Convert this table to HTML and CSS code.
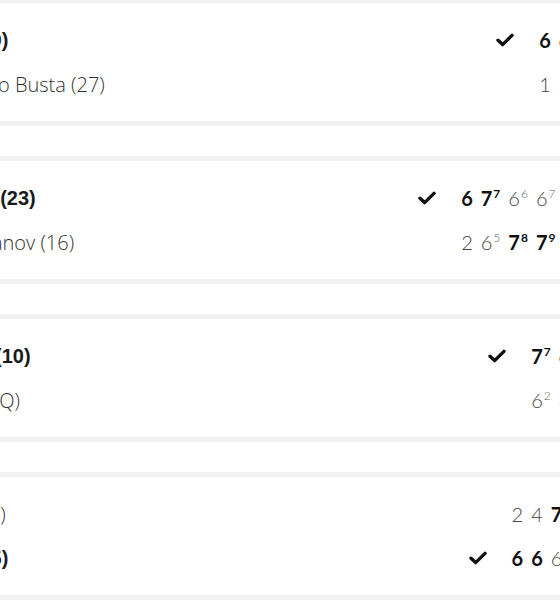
FILE: index.html
```html
<!DOCTYPE html>
<html lang="en">
<head>
<meta charset="utf-8">
<title>Results</title>
<link rel="stylesheet" href="styles.css">
</head>
<body>
<div class="list">

  <div class="match sets-3">
    <div class="name win">T. Fritz (9)</div>
    <div class="check"><svg viewBox="0 0 18 14" width="18" height="14"><path d="M2 7.2 L6.6 11.6 L16 2.4" /></svg></div>
    <div class="set win"><span class="g">6</span></div>
    <div class="set win"><span class="g">6</span></div>
    <div class="set win"><span class="g">6</span></div>

    <div class="name">P. Carreño Busta (27)</div>
    <div class="check"></div>
    <div class="set"><span class="g">1</span></div>
    <div class="set"><span class="g">2</span></div>
    <div class="set"><span class="g">3</span></div>
  </div>

  <div class="match sets-5">
    <div class="name win">F. Tiafoe (23)</div>
    <div class="check"><svg viewBox="0 0 18 14" width="18" height="14"><path d="M2 7.2 L6.6 11.6 L16 2.4" /></svg></div>
    <div class="set win"><span class="g">6</span></div>
    <div class="set win"><span class="g">7</span><span class="tb">7</span></div>
    <div class="set"><span class="g">6</span><span class="tb">6</span></div>
    <div class="set"><span class="g">6</span><span class="tb">7</span></div>
    <div class="set win"><span class="g">7</span><span class="tb">10</span></div>

    <div class="name">K. Khachanov (16)</div>
    <div class="check"></div>
    <div class="set"><span class="g">2</span></div>
    <div class="set"><span class="g">6</span><span class="tb">5</span></div>
    <div class="set win"><span class="g">7</span><span class="tb">8</span></div>
    <div class="set win"><span class="g">7</span><span class="tb">9</span></div>
    <div class="set"><span class="g">6</span><span class="tb">8</span></div>
  </div>

  <div class="match sets-3">
    <div class="name win">N. Jarry (10)</div>
    <div class="check"><svg viewBox="0 0 18 14" width="18" height="14"><path d="M2 7.2 L6.6 11.6 L16 2.4" /></svg></div>
    <div class="set win"><span class="g">7</span><span class="tb">7</span></div>
    <div class="set win"><span class="g">6</span></div>
    <div class="set win"><span class="g">6</span></div>

    <div class="name">J. Kubler (Q)</div>
    <div class="check"></div>
    <div class="set"><span class="g">6</span><span class="tb">2</span></div>
    <div class="set"><span class="g">3</span></div>
    <div class="set"><span class="g">4</span></div>
  </div>

  <div class="match sets-4">
    <div class="name">J. Djere (5)</div>
    <div class="check"></div>
    <div class="set"><span class="g">2</span></div>
    <div class="set"><span class="g">4</span></div>
    <div class="set win"><span class="g">7</span><span class="tb">7</span></div>
    <div class="set"><span class="g">3</span></div>

    <div class="name win">T. Paul (5)</div>
    <div class="check"><svg viewBox="0 0 18 14" width="18" height="14"><path d="M2 7.2 L6.6 11.6 L16 2.4" /></svg></div>
    <div class="set win"><span class="g">6</span></div>
    <div class="set win"><span class="g">6</span></div>
    <div class="set"><span class="g">6</span><span class="tb">4</span></div>
    <div class="set win"><span class="g">6</span></div>
  </div>

</div>
</body>
</html>
```

FILE: styles.css
```css
html, body {
  margin: 0;
  padding: 0;
  overflow: hidden;
  background: #ffffff;
}

.list {
  margin: -2px 0 0 -109px;
  width: 723px;
  display: flex;
  flex-direction: column;
  gap: 30px;
}

.match {
  display: grid;
  grid-template-rows: 44px 44px;
  column-gap: 8px;
  align-items: center;
  padding: 15px 24px;
  border-top: 5px solid #f2f2f2;
  border-bottom: 5px solid #f2f2f2;
  background: #ffffff;
}

.sets-3 { grid-template-columns: 1fr 35px repeat(3, auto); }
.sets-4 { grid-template-columns: 1fr 35px repeat(4, auto); }
.sets-5 { grid-template-columns: 1fr 35px repeat(5, auto); }

.name {
  white-space: nowrap;
  font-family: "Open Sans", "DejaVu Sans", sans-serif;
  font-weight: 300;
  font-size: 20px;
  color: #333333;
}

.name.win {
  font-family: "Liberation Sans", Arial, sans-serif;
  font-weight: 700;
  color: #1a1a1a;
}

.check {
  display: flex;
  align-items: center;
  height: 14px;
}

.check svg path {
  fill: none;
  stroke: #111111;
  stroke-width: 3.4;
  stroke-linecap: round;
  stroke-linejoin: round;
}

.set {
  display: flex;
  align-items: flex-start;
  font-family: "Lato", "Open Sans", sans-serif;
  font-weight: 300;
  color: #444444;
}

.set .g {
  font-size: 20px;
  line-height: 24px;
}

.set .tb {
  font-size: 12px;
  line-height: 12px;
  margin-top: 2px;
  margin-left: 1px;
  color: #666666;
}

.set.win {
  font-weight: 700;
  color: #111111;
}

.set.win .tb {
  color: #111111;
}
```
